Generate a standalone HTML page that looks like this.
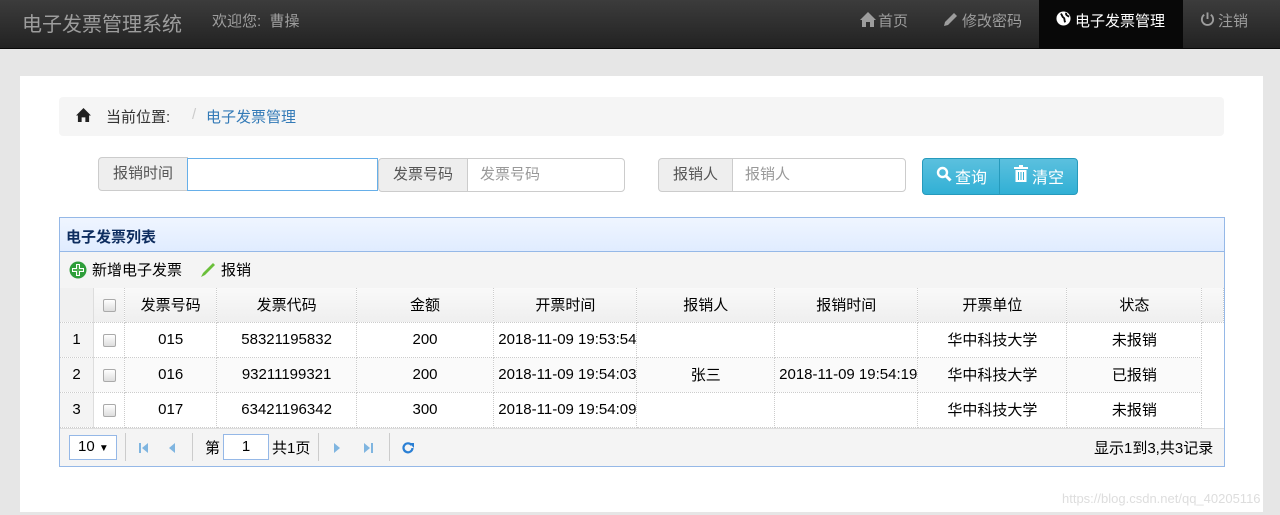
<!DOCTYPE html>
<html><head><meta charset="utf-8"><style>
*{box-sizing:border-box;margin:0;padding:0}
body{width:1280px;height:515px;overflow:hidden;background:#e6e6e6;font-family:"Liberation Sans","Noto Sans CJK SC",sans-serif;font-size:15px;color:#333;position:relative}
.nav{position:absolute;left:0;top:0;width:1280px;height:49px;background:linear-gradient(#3c3c3c,#222);border-bottom:1px solid #080808}
.abs{position:absolute}
.brand{left:22px;top:8px;font-size:20px;color:#9d9d9d}
.wel{left:212px;top:10px;font-size:15px;color:#9d9d9d}
.ni{top:10px;font-size:15px;color:#9d9d9d}
.act{left:1039px;top:0;width:144px;height:49px;background:#080808}
.panel{left:20px;top:76px;width:1243px;height:436px;background:#fff}
.bc{left:59px;top:97px;width:1165px;height:39px;background:#f5f5f5;border-radius:4px}
.addon{height:34px;background:#eee;border:1px solid #ccc;color:#555;font-size:15px;text-align:center;line-height:32px}
.inp{height:34px;background:#fff;border:1px solid #ccc;color:#999;font-size:15px;line-height:32px;padding-left:12px}
.grid{left:59px;top:217px;width:1166px;height:250px;border:1px solid #95b8e7;background:#fff}
table{border-collapse:collapse;position:absolute;left:0;top:70px;table-layout:fixed}
td{height:35px;border-right:1px dotted #ccc;border-bottom:1px dotted #ccc;text-align:center;font-size:15px;color:#000;white-space:nowrap;overflow:hidden}
tr.h td{height:34px;background:linear-gradient(#f9f9f9,#efefef);color:#000}
td.rn{background:#f4f4f4;border-right:1px solid #ddd}
td.l{text-align:left;padding-left:4px}
.cb{display:inline-block;width:13px;height:13px;border:1px solid #aaa;border-radius:2px;background:linear-gradient(#fff,#ddd);vertical-align:middle}
</style></head><body>
<div class="nav">
<div class="abs brand">电子发票管理系统</div>
<div class="abs wel">欢迎您:&nbsp;&nbsp;曹操</div>
<div class="abs act"></div>
<svg class="abs" style="left:860px;top:12px" width="16" height="15" viewBox="0 0 16 15"><path d="M8 0L0 8h2v7h4v-5h4v5h4V8h2z" fill="#9d9d9d"/></svg>
<div class="abs ni" style="left:878px">首页</div>
<svg class="abs" style="left:942px;top:12px" width="16" height="16" viewBox="0 0 16 16"><path d="M12 1l3 3-9 9-4 1 1-4z" fill="#9d9d9d"/></svg>
<div class="abs ni" style="left:962px">修改密码</div>
<svg class="abs" style="left:1056px;top:11px" width="15" height="15" viewBox="0 0 16 16"><circle cx="8" cy="8" r="7.5" fill="#fff"/><path d="M5 3c2 1 1 3 3 4s0 3 2 5M11 2c-1 2 1 3 3 4" stroke="#080808" stroke-width="2" fill="none"/></svg>
<div class="abs ni" style="left:1075px;color:#fff">电子发票管理</div>
<svg class="abs" style="left:1200px;top:11px" width="15" height="16" viewBox="0 0 16 16"><path d="M4.5 3.5A6 6 0 1 0 11.5 3.5" stroke="#9d9d9d" stroke-width="2" fill="none"/><path d="M8 1v7" stroke="#9d9d9d" stroke-width="2"/></svg>
<div class="abs ni" style="left:1218px">注销</div>
</div>
<div class="abs panel"></div>
<div class="abs bc"></div>
<svg class="abs" style="left:76px;top:108px" width="15" height="14" viewBox="0 0 16 15"><path d="M8 0L0 8h2v7h4v-5h4v5h4V8h2z" fill="#222"/></svg>
<div class="abs" style="left:106px;top:106px;color:#333">当前位置:</div>
<div class="abs" style="left:192px;top:106px;color:#ccc">/</div>
<div class="abs" style="left:206px;top:106px;color:#337ab7">电子发票管理</div>

<div class="abs addon" style="left:98px;top:157px;width:90px;border-radius:4px 0 0 4px">报销时间</div>
<div class="abs inp" style="left:187px;top:158px;width:191px;border-color:#66afe9;height:33px"></div>
<div class="abs addon" style="left:378px;top:158px;width:90px;border-radius:4px 0 0 4px">发票号码</div>
<div class="abs inp" style="left:467px;top:158px;width:158px;border-radius:0 4px 4px 0">发票号码</div>
<div class="abs addon" style="left:658px;top:158px;width:75px;border-radius:4px 0 0 4px">报销人</div>
<div class="abs inp" style="left:732px;top:158px;width:174px;border-radius:0 4px 4px 0">报销人</div>
<div class="abs" style="left:922px;top:158px;width:156px;height:37px;background:linear-gradient(#5bc0de,#31b0d5);border:1px solid #269abc;border-radius:4px"></div>
<div class="abs" style="left:999px;top:158px;width:1px;height:37px;background:#269abc"></div>
<svg class="abs" style="left:936px;top:166px" width="16" height="16" viewBox="0 0 16 16"><circle cx="6.5" cy="6.5" r="4.5" stroke="#fff" stroke-width="2.4" fill="none"/><path d="M10 10l4.5 4.5" stroke="#fff" stroke-width="3"/></svg>
<div class="abs" style="left:955px;top:164px;color:#fff;font-size:16px">查询</div>
<svg class="abs" style="left:1014px;top:165px" width="14" height="17" viewBox="0 0 14 17"><rect x="0" y="2" width="14" height="2" fill="#fff"/><rect x="5" y="0" width="4" height="2" fill="#fff"/><path d="M1.5 5h11v12h-11z" fill="#fff"/><path d="M4.5 7v8M7 7v8M9.5 7v8" stroke="#31b0d5"/></svg>
<div class="abs" style="left:1032px;top:164px;color:#fff;font-size:16px">清空</div>

<div class="abs grid">
<div class="abs" style="left:0;top:0;width:1164px;height:34px;background:linear-gradient(#eff5ff,#e0ecff);border-bottom:1px solid #95b8e7"></div>
<div class="abs" style="left:6px;top:8px;font-weight:bold;color:#0e2d5f;font-size:15px">电子发票列表</div>
<div class="abs" style="left:0;top:34px;width:1164px;height:36px;background:#f4f4f4"></div>
<svg class="abs" style="left:9px;top:43px" width="18" height="18" viewBox="0 0 18 18"><circle cx="9" cy="9" r="8.5" fill="#2e9e3a"/><path d="M7 3h4v4h4v4h-4v4H7v-4H3V7h4z" fill="#fff"/><path d="M8 4h2v4h4v2h-4v4H8v-4H4V8h4z" fill="#4caf50"/></svg>
<div class="abs" style="left:32px;top:41px;font-size:15px;color:#000">新增电子发票</div>
<svg class="abs" style="left:140px;top:44px" width="16" height="16" viewBox="0 0 16 16"><path d="M13 1l2 2-10 10-4 2 2-4z" fill="#6abf3a"/></svg>
<div class="abs" style="left:161px;top:41px;font-size:15px;color:#000">报销</div>
<table>
<colgroup><col style="width:34px"><col style="width:31px"><col style="width:93px"><col style="width:140px"><col style="width:139px"><col style="width:140px"><col style="width:139px"><col style="width:140px"><col style="width:150px"><col style="width:136px"><col style="width:22px"></colgroup>
<tr class="h"><td class="rn" style="background:#f0f0f0"></td><td><span class="cb"></span></td><td>发票号码</td><td>发票代码</td><td>金额</td><td>开票时间</td><td>报销人</td><td>报销时间</td><td>开票单位</td><td>状态</td><td></td></tr>
<tr><td class="rn">1</td><td><span class="cb"></span></td><td>015</td><td>58321195832</td><td>200</td><td class="l">2018-11-09 19:53:54</td><td></td><td></td><td>华中科技大学</td><td>未报销</td><td style="border:none"></td></tr>
<tr style="background:#fafafa"><td class="rn">2</td><td><span class="cb"></span></td><td>016</td><td>93211199321</td><td>200</td><td class="l">2018-11-09 19:54:03</td><td>张三</td><td class="l">2018-11-09 19:54:19</td><td>华中科技大学</td><td>已报销</td><td style="border:none;background:#fff"></td></tr>
<tr><td class="rn">3</td><td><span class="cb"></span></td><td>017</td><td>63421196342</td><td>300</td><td class="l">2018-11-09 19:54:09</td><td></td><td></td><td>华中科技大学</td><td>未报销</td><td style="border:none"></td></tr>
</table>
<div class="abs" style="left:0;top:210px;width:1164px;height:38px;background:#f4f4f4;border-top:1px solid #ddd"></div>
<div class="abs" style="left:9px;top:217px;width:48px;height:25px;border:1px solid #95b8e7;background:#fff;font-size:15px;padding:2px 0 0 8px;color:#000">10 <span style="font-size:10px">▼</span></div>
<div class="abs" style="left:65px;top:215px;width:1px;height:28px;background:#ccc"></div>
<svg class="abs" style="left:79px;top:224px" width="40" height="12"><rect x="0" y="1" width="2" height="10" fill="#7fb5e0"/><path d="M9 1v10L3 6z" fill="#7fb5e0"/><path d="M36 1v10l-6-5z" fill="#7fb5e0"/></svg>
<div class="abs" style="left:132px;top:215px;width:1px;height:28px;background:#ccc"></div>
<div class="abs" style="left:145px;top:219px;color:#000">第</div>
<div class="abs" style="left:163px;top:216px;width:46px;height:26px;border:1px solid #95b8e7;background:#fff;text-align:center;line-height:24px;color:#000">1</div>
<div class="abs" style="left:212px;top:219px;color:#000">共1页</div>
<div class="abs" style="left:258px;top:215px;width:1px;height:28px;background:#ccc"></div>
<svg class="abs" style="left:274px;top:224px" width="40" height="12"><path d="M0 1v10l6-5z" fill="#7fb5e0"/><path d="M30 1v10l6-5z" fill="#7fb5e0"/><rect x="37" y="1" width="2" height="10" fill="#7fb5e0"/></svg>
<div class="abs" style="left:329px;top:215px;width:1px;height:28px;background:#ccc"></div>
<svg class="abs" style="left:341px;top:223px" width="14" height="14" viewBox="0 0 14 14"><path d="M10.5 4A4.5 4.5 0 1 0 11.5 7" stroke="#2a7fd4" stroke-width="2.2" fill="none"/><path d="M8 2h5v5z" fill="#2a7fd4"/></svg>
<div class="abs" style="left:1034px;top:219px;color:#000">显示1到3,共3记录</div>
</div>
<div class="abs" style="left:1062px;top:491px;color:#ddd;font-size:13px">https://blog.csdn.net/qq_40205116</div>
</body></html>
